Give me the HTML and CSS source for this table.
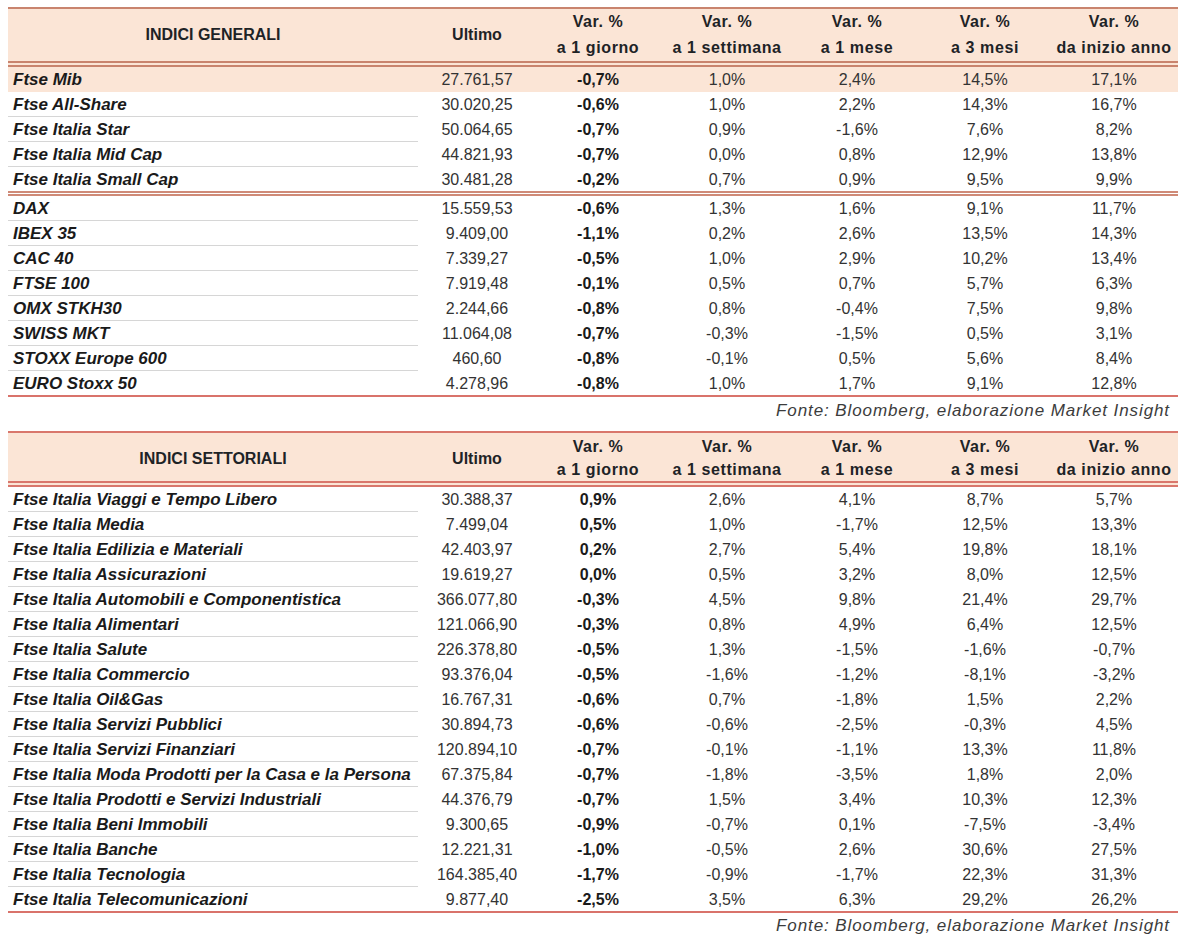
FILE: index.html
```html
<!DOCTYPE html>
<html lang="it">
<head>
<meta charset="utf-8">
<title>Indici</title>
<link rel="stylesheet" href="styles.css">
</head>
<body>
<div class="page">
  <table class="idx idx-gen">
    <colgroup>
      <col class="c-name"><col class="c-ult"><col class="c-g"><col class="c-s"><col class="c-m"><col class="c-3"><col class="c-a">
    </colgroup>
    <thead>
      <tr>
        <th>INDICI GENERALI</th><th>Ultimo</th><th class="var">Var. %<br>a 1 giorno</th><th class="var">Var. %<br>a 1 settimana</th><th class="var">Var. %<br>a 1 mese</th><th class="var">Var. %<br>a 3 mesi</th><th class="var">Var. %<br>da inizio anno</th>
      </tr>
    </thead>
    <tbody>
      <tr class="hl"><td class="name">Ftse Mib</td><td>27.761,57</td><td class="b">-0,7%</td><td>1,0%</td><td>2,4%</td><td>14,5%</td><td>17,1%</td></tr>
      <tr><td class="name">Ftse All-Share</td><td>30.020,25</td><td class="b">-0,6%</td><td>1,0%</td><td>2,2%</td><td>14,3%</td><td>16,7%</td></tr>
      <tr><td class="name">Ftse Italia Star</td><td>50.064,65</td><td class="b">-0,7%</td><td>0,9%</td><td>-1,6%</td><td>7,6%</td><td>8,2%</td></tr>
      <tr><td class="name">Ftse Italia Mid Cap</td><td>44.821,93</td><td class="b">-0,7%</td><td>0,0%</td><td>0,8%</td><td>12,9%</td><td>13,8%</td></tr>
      <tr class="grp-end"><td class="name">Ftse Italia Small Cap</td><td>30.481,28</td><td class="b">-0,2%</td><td>0,7%</td><td>0,9%</td><td>9,5%</td><td>9,9%</td></tr>
      <tr><td class="name">DAX</td><td>15.559,53</td><td class="b">-0,6%</td><td>1,3%</td><td>1,6%</td><td>9,1%</td><td>11,7%</td></tr>
      <tr><td class="name">IBEX 35</td><td>9.409,00</td><td class="b">-1,1%</td><td>0,2%</td><td>2,6%</td><td>13,5%</td><td>14,3%</td></tr>
      <tr><td class="name">CAC 40</td><td>7.339,27</td><td class="b">-0,5%</td><td>1,0%</td><td>2,9%</td><td>10,2%</td><td>13,4%</td></tr>
      <tr><td class="name">FTSE 100</td><td>7.919,48</td><td class="b">-0,1%</td><td>0,5%</td><td>0,7%</td><td>5,7%</td><td>6,3%</td></tr>
      <tr><td class="name">OMX STKH30</td><td>2.244,66</td><td class="b">-0,8%</td><td>0,8%</td><td>-0,4%</td><td>7,5%</td><td>9,8%</td></tr>
      <tr><td class="name">SWISS MKT</td><td>11.064,08</td><td class="b">-0,7%</td><td>-0,3%</td><td>-1,5%</td><td>0,5%</td><td>3,1%</td></tr>
      <tr><td class="name">STOXX Europe 600</td><td>460,60</td><td class="b">-0,8%</td><td>-0,1%</td><td>0,5%</td><td>5,6%</td><td>8,4%</td></tr>
      <tr class="last"><td class="name">EURO Stoxx 50</td><td>4.278,96</td><td class="b">-0,8%</td><td>1,0%</td><td>1,7%</td><td>9,1%</td><td>12,8%</td></tr>
    </tbody>
  </table>
  <p class="src src-1">Fonte: Bloomberg, elaborazione Market Insight</p>

  <table class="idx idx-set">
    <colgroup>
      <col class="c-name"><col class="c-ult"><col class="c-g"><col class="c-s"><col class="c-m"><col class="c-3"><col class="c-a">
    </colgroup>
    <thead>
      <tr>
        <th>INDICI SETTORIALI</th><th>Ultimo</th><th class="var">Var. %<br>a 1 giorno</th><th class="var">Var. %<br>a 1 settimana</th><th class="var">Var. %<br>a 1 mese</th><th class="var">Var. %<br>a 3 mesi</th><th class="var">Var. %<br>da inizio anno</th>
      </tr>
    </thead>
    <tbody>
      <tr><td class="name">Ftse Italia Viaggi e Tempo Libero</td><td>30.388,37</td><td class="b">0,9%</td><td>2,6%</td><td>4,1%</td><td>8,7%</td><td>5,7%</td></tr>
      <tr><td class="name">Ftse Italia Media</td><td>7.499,04</td><td class="b">0,5%</td><td>1,0%</td><td>-1,7%</td><td>12,5%</td><td>13,3%</td></tr>
      <tr><td class="name">Ftse Italia Edilizia e Materiali</td><td>42.403,97</td><td class="b">0,2%</td><td>2,7%</td><td>5,4%</td><td>19,8%</td><td>18,1%</td></tr>
      <tr><td class="name">Ftse Italia Assicurazioni</td><td>19.619,27</td><td class="b">0,0%</td><td>0,5%</td><td>3,2%</td><td>8,0%</td><td>12,5%</td></tr>
      <tr><td class="name">Ftse Italia Automobili e Componentistica</td><td>366.077,80</td><td class="b">-0,3%</td><td>4,5%</td><td>9,8%</td><td>21,4%</td><td>29,7%</td></tr>
      <tr><td class="name">Ftse Italia Alimentari</td><td>121.066,90</td><td class="b">-0,3%</td><td>0,8%</td><td>4,9%</td><td>6,4%</td><td>12,5%</td></tr>
      <tr><td class="name">Ftse Italia Salute</td><td>226.378,80</td><td class="b">-0,5%</td><td>1,3%</td><td>-1,5%</td><td>-1,6%</td><td>-0,7%</td></tr>
      <tr><td class="name">Ftse Italia Commercio</td><td>93.376,04</td><td class="b">-0,5%</td><td>-1,6%</td><td>-1,2%</td><td>-8,1%</td><td>-3,2%</td></tr>
      <tr><td class="name">Ftse Italia Oil&amp;Gas</td><td>16.767,31</td><td class="b">-0,6%</td><td>0,7%</td><td>-1,8%</td><td>1,5%</td><td>2,2%</td></tr>
      <tr><td class="name">Ftse Italia Servizi Pubblici</td><td>30.894,73</td><td class="b">-0,6%</td><td>-0,6%</td><td>-2,5%</td><td>-0,3%</td><td>4,5%</td></tr>
      <tr><td class="name">Ftse Italia Servizi Finanziari</td><td>120.894,10</td><td class="b">-0,7%</td><td>-0,1%</td><td>-1,1%</td><td>13,3%</td><td>11,8%</td></tr>
      <tr><td class="name">Ftse Italia Moda Prodotti per la Casa e la Persona</td><td>67.375,84</td><td class="b">-0,7%</td><td>-1,8%</td><td>-3,5%</td><td>1,8%</td><td>2,0%</td></tr>
      <tr><td class="name">Ftse Italia Prodotti e Servizi Industriali</td><td>44.376,79</td><td class="b">-0,7%</td><td>1,5%</td><td>3,4%</td><td>10,3%</td><td>12,3%</td></tr>
      <tr><td class="name">Ftse Italia Beni Immobili</td><td>9.300,65</td><td class="b">-0,9%</td><td>-0,7%</td><td>0,1%</td><td>-7,5%</td><td>-3,4%</td></tr>
      <tr><td class="name">Ftse Italia Banche</td><td>12.221,31</td><td class="b">-1,0%</td><td>-0,5%</td><td>2,6%</td><td>30,6%</td><td>27,5%</td></tr>
      <tr><td class="name">Ftse Italia Tecnologia</td><td>164.385,40</td><td class="b">-1,7%</td><td>-0,9%</td><td>-1,7%</td><td>22,3%</td><td>31,3%</td></tr>
      <tr class="last"><td class="name">Ftse Italia Telecomunicazioni</td><td>9.877,40</td><td class="b">-2,5%</td><td>3,5%</td><td>6,3%</td><td>29,2%</td><td>26,2%</td></tr>
    </tbody>
  </table>
  <p class="src src-2">Fonte: Bloomberg, elaborazione Market Insight</p>
</div>
</body>
</html>
```

FILE: styles.css
```css
html, body {
  margin: 0;
  padding: 0;
  background: #ffffff;
}

.page {
  padding: 7px 14px 0 8px;
  font-family: "Liberation Sans", Arial, sans-serif;
  font-size: 16px;
  color: #2b2b2b;
}

.idx {
  width: 1170px;
  table-layout: fixed;
  border-collapse: separate;
  border-spacing: 0;
}

.c-name { width: 410px; }
.c-ult  { width: 118px; }
.c-g    { width: 124px; }
.c-s    { width: 134px; }
.c-m    { width: 126px; }
.c-3    { width: 130px; }
.c-a    { width: 128px; }

.idx th {
  background: #fbe5d6;
  font-weight: bold;
  color: #1e2326;
  text-align: center;
  vertical-align: middle;
  padding: 0;
  line-height: 26px;
  white-space: nowrap;
  border-top: 2px solid #c9846e;
  border-bottom: 6px double #c9846e;
}

.idx th.var {
  letter-spacing: 0.6px;
}

.idx-set th {
  padding-top: 2px;
  line-height: 23px;
  border-top-color: #d9776c;
  border-bottom-color: #d9776c;
}

.idx td {
  padding: 2px 0 0 0;
  line-height: 22px;
  text-align: center;
  white-space: nowrap;
  border-bottom: 1px solid transparent;
  color: #333333;
}

.idx td.name {
  text-align: left;
  padding-left: 5px;
  font-size: 17px;
  font-weight: bold;
  font-style: italic;
  color: #1a1a1a;
  border-bottom-color: #d6d6d6;
}

.idx td.b {
  font-weight: bold;
  color: #1a1a1a;
}

.idx tr.hl td {
  background: #fbe5d6;
  border-bottom-color: transparent;
}

.idx tr.grp-end td {
  border-bottom: 5px double #cf8a77;
}

.idx tr.last td {
  border-bottom: 2px solid #d9736b;
}

.src {
  margin: 0;
  width: 1162px;
  text-align: right;
  font-size: 17px;
  letter-spacing: 0.9px;
  font-style: italic;
  color: #3c3c3c;
}

.src-1 {
  padding-top: 1px;
  line-height: 25px;
  margin-bottom: 8px;
}

.src-2 {
  padding-top: 1px;
  line-height: 23px;
}
```
